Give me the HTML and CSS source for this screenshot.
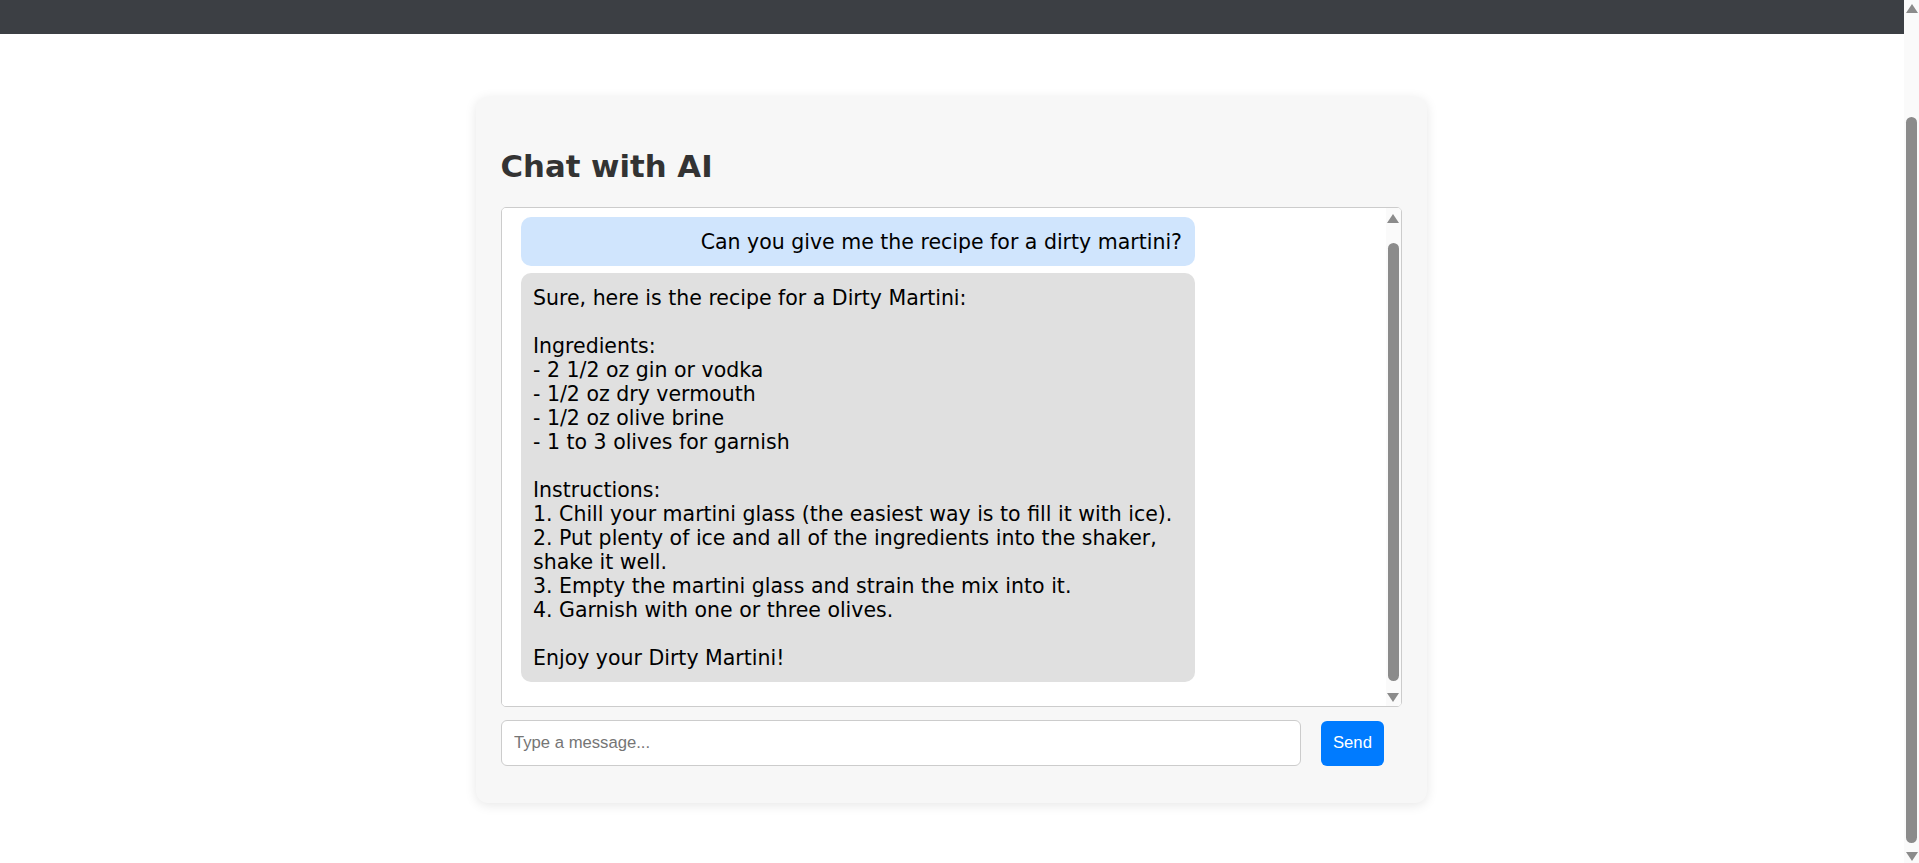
FILE: index.html
```html
<!DOCTYPE html>
<html lang="en">
<head>
<meta charset="utf-8">
<title>Chat with AI</title>
<link rel="stylesheet" href="styles.css">
</head>
<body>
<header class="topbar"></header>
<div class="page-scrollbar" aria-hidden="true">
  <span class="sb-arrow up"></span>
  <span class="sb-thumb page-thumb"></span>
  <span class="sb-arrow down"></span>
</div>
<main class="page">
  <section class="chat-container">
    <h2 class="chat-title">Chat with AI</h2>
    <div class="chat-frame">
      <div class="chat-box" id="chatBox">
        <div class="message user">Can you give me the recipe for a dirty martini?</div>
        <div class="message bot">Sure, here is the recipe for a Dirty Martini:

Ingredients:
- 2 1/2 oz gin or vodka
- 1/2 oz dry vermouth
- 1/2 oz olive brine
- 1 to 3 olives for garnish

Instructions:
1. Chill your martini glass (the easiest way is to fill it with ice).
2. Put plenty of ice and all of the ingredients into the shaker, shake it well.
3. Empty the martini glass and strain the mix into it.
4. Garnish with one or three olives.

Enjoy your Dirty Martini!</div>
      </div>
      <div class="chat-scrollbar" aria-hidden="true">
        <span class="sb-arrow up"></span>
        <span class="sb-thumb chat-thumb"></span>
        <span class="sb-arrow down"></span>
      </div>
    </div>
    <form class="input-row" onsubmit="return false;">
      <input class="message-input" type="text" placeholder="Type a message...">
      <button class="send-btn" type="button">Send</button>
    </form>
  </section>
</main>
<script src="script.js"></script>
</body>
</html>
```

FILE: styles.css
```css
html, body {
  margin: 0;
  padding: 0;
}

body {
  background: #ffffff;
  font-family: "DejaVu Sans", Verdana, sans-serif;
}

.topbar {
  position: fixed;
  top: 0;
  left: 0;
  right: 0;
  height: 34px;
  background: #3c3f44;
  z-index: 10;
}

/* scrollbar drawings (overlay) */
.page-scrollbar {
  position: fixed;
  top: 0;
  right: 0;
  bottom: 0;
  width: 15px;
  background: #fafafa;
  z-index: 20;
  display: flex;
  flex-direction: column;
  align-items: center;
  padding: 4px 0 2px;
  box-sizing: border-box;
}

.sb-arrow {
  width: 0;
  height: 0;
  border-left: 6px solid transparent;
  border-right: 6px solid transparent;
  flex: none;
}

.sb-arrow.up {
  border-bottom: 9px solid #8b8b8b;
}

.sb-arrow.down {
  border-top: 9px solid #8b8b8b;
  margin-top: auto;
}

.sb-thumb {
  width: 11px;
  background: #8b8b8b;
  border-radius: 6px;
  flex: none;
}

.page-thumb {
  margin-top: 104px;
  height: 726px;
}

.page {
  padding: 214px 17px 62px 0;
}

.chat-container {
  width: 951px;
  box-sizing: border-box;
  margin: 0 auto;
  padding: 25px;
  background: #f7f7f7;
  border-radius: 12px;
  box-shadow: 0 2px 12px rgba(0, 0, 0, 0.1);
}

.chat-title {
  margin: 27px 0 23px;
  font-size: 30.75px;
  line-height: 35px;
  font-weight: bold;
  color: #333333;
}

.chat-frame {
  position: relative;
}

.chat-box {
  height: 500px;
  box-sizing: border-box;
  border: 1px solid #cccccc;
  border-radius: 5px;
  background: #ffffff;
  overflow-y: scroll;
  padding: 28px 19px 32px;
  display: flex;
  flex-direction: column;
  gap: 7px;
}

.chat-scrollbar {
  position: absolute;
  top: 1px;
  right: 1px;
  bottom: 1px;
  width: 15px;
  background: #fafafa;
  border-radius: 0 4px 4px 0;
  display: flex;
  flex-direction: column;
  align-items: center;
  padding: 6px 0 4px;
  box-sizing: border-box;
}

.chat-thumb {
  margin-top: 20px;
  height: 438px;
}

.message {
  width: 674px;
  box-sizing: border-box;
  padding: 12.5px;
  border-radius: 10px;
  font-size: 20.5px;
  line-height: 24px;
  color: #000000;
  white-space: pre-wrap;
  flex: none;
}

.message.user {
  background: #d0e5fd;
  text-align: right;
}

.message.bot {
  background: #e0e0e0;
}

.input-row {
  display: flex;
  align-items: center;
  gap: 20px;
  margin: 13px 0 12px;
}

.message-input {
  width: 800px;
  height: 46px;
  box-sizing: border-box;
  padding: 12.5px;
  border: 1px solid #cccccc;
  border-radius: 6px;
  background: #ffffff;
  font-family: "Liberation Sans", Arial, sans-serif;
  font-size: 16.67px;
  color: #000;
  outline: none;
}

.message-input::placeholder {
  color: #757575;
}

.send-btn {
  height: 45px;
  padding: 0 12.5px;
  border: none;
  border-radius: 6px;
  background: #007bff;
  color: #ffffff;
  font-family: "Liberation Sans", Arial, sans-serif;
  font-size: 16.67px;
  cursor: pointer;
}
```

FILE: script.js
```js
(function () {
  function applyScroll() {
    var box = document.getElementById('chatBox');
    if (box) { box.scrollTop = 19; }
    window.scrollTo(0, 117);
  }
  applyScroll();
  document.addEventListener('DOMContentLoaded', applyScroll);
  window.addEventListener('load', applyScroll);
})();
```
